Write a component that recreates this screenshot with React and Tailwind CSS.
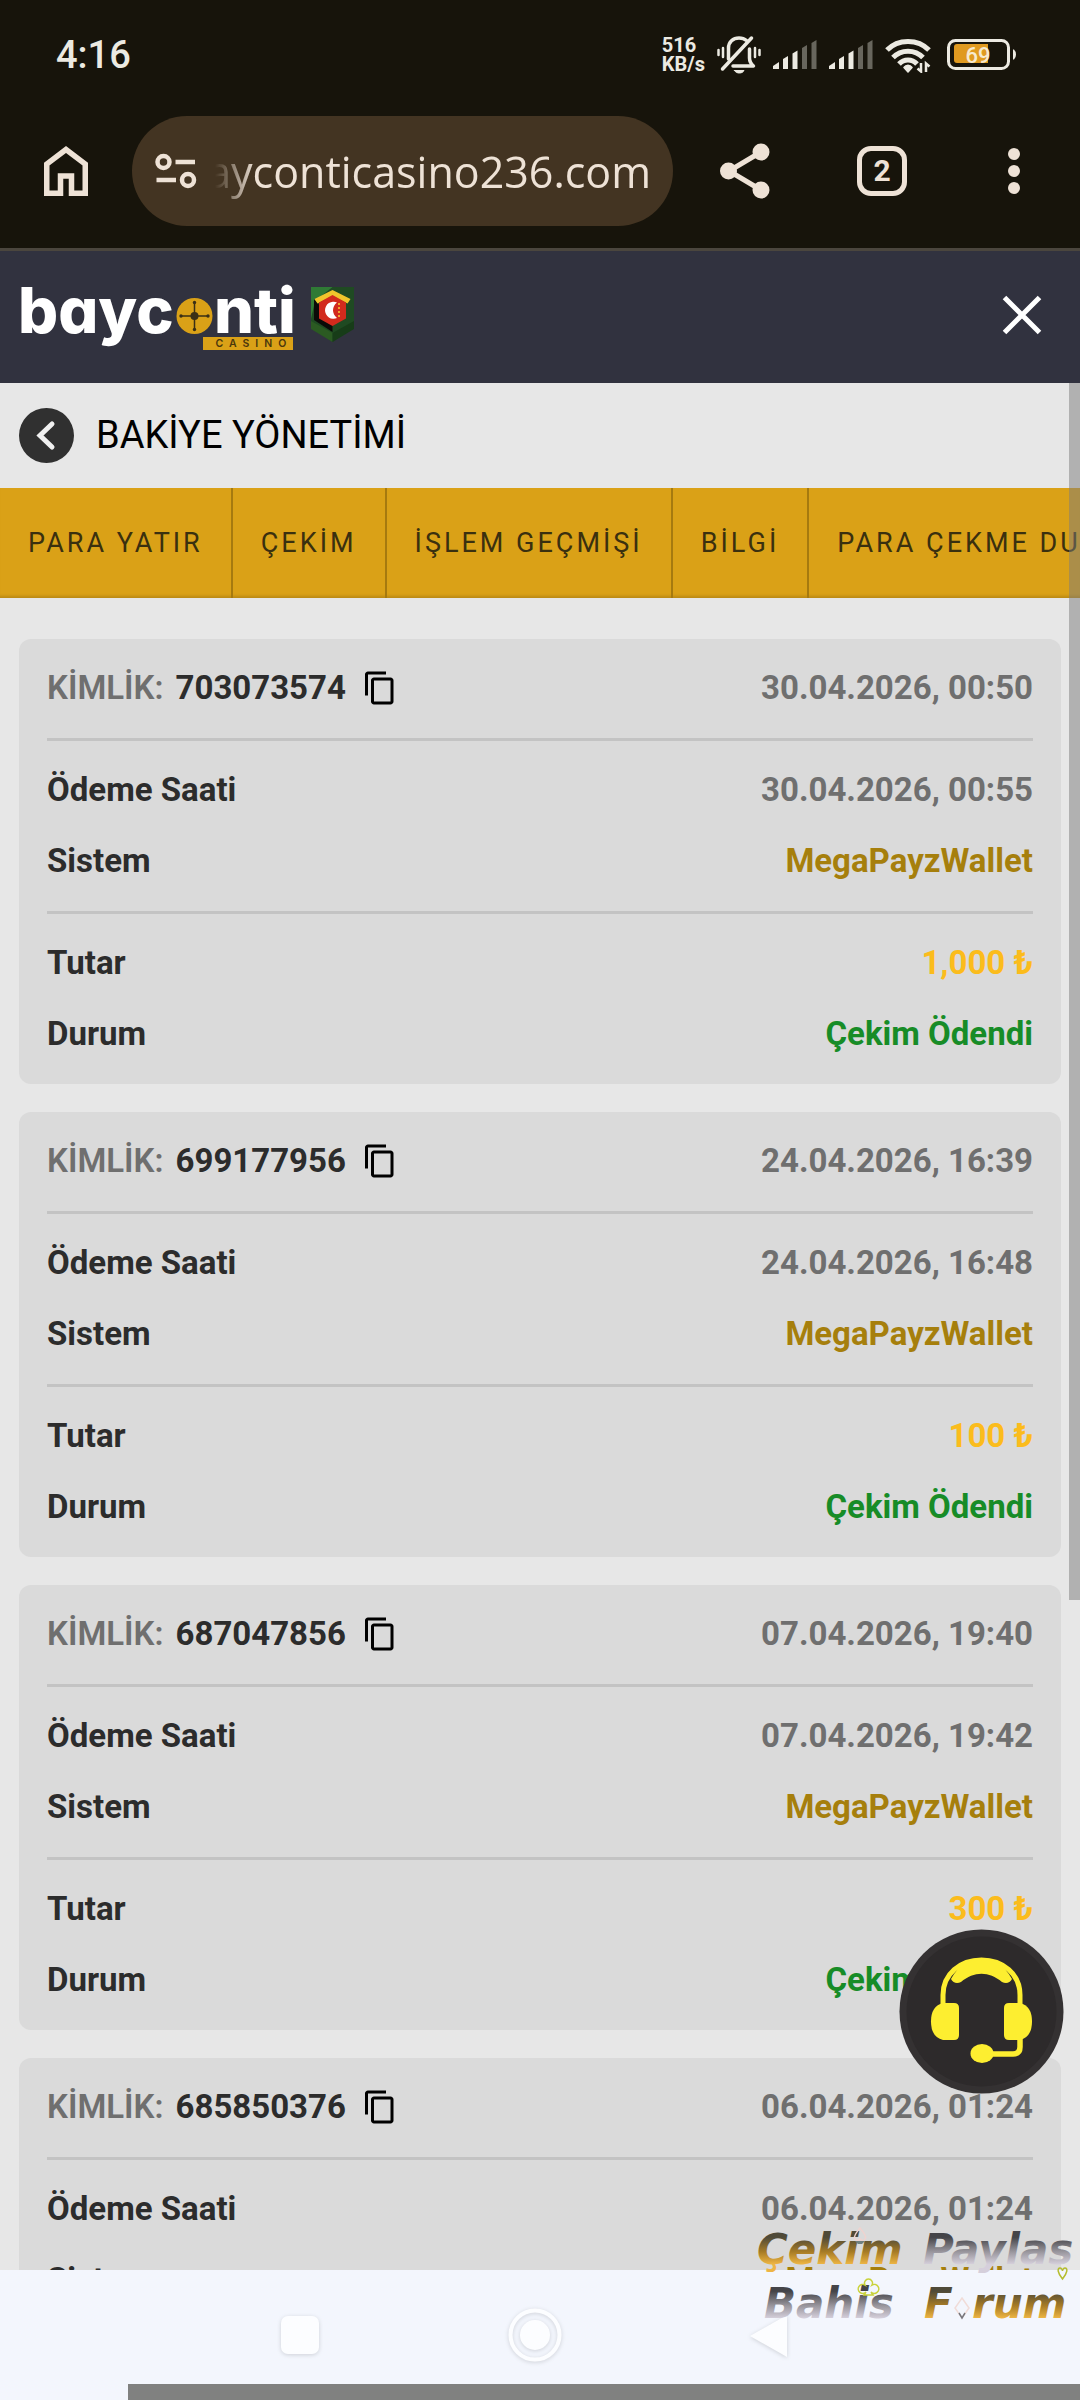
import React, { useState } from 'react';
import { MdContentCopy } from 'react-icons/md';

const tabs = ['PARA YATIR', 'ÇEKİM', 'İŞLEM GEÇMİŞİ', 'BİLGİ', 'PARA ÇEKME DURUMU'];

const payments = [
  { id: '703073574', created: '30.04.2026, 00:50', paid: '30.04.2026, 00:55', amount: '1,000 ₺' },
  { id: '699177956', created: '24.04.2026, 16:39', paid: '24.04.2026, 16:48', amount: '100 ₺' },
  { id: '687047856', created: '07.04.2026, 19:40', paid: '07.04.2026, 19:42', amount: '300 ₺' },
  { id: '685850376', created: '06.04.2026, 01:24', paid: '06.04.2026, 01:24', amount: '500 ₺' },
];

const SignalIcon = () => (
  <svg width="44" height="30" viewBox="0 0 44 30" fill="#eceae2">
    <path d="M0 29v-3l6-4v7z" />
    <path d="M10 29V19l5-3v13z" />
    <path d="M19.500 29V13.500l5-3V29z" />
    <path d="M29 29V8l5-3v24z" fill="#68665d" />
    <path d="M38.500 29V3l5-3v29z" fill="#68665d" />
  </svg>
);

const MuteIcon = () => (
  <svg width="44" height="40" viewBox="0 0 44 40" fill="none" stroke="#eceae2" strokeLinecap="round">
    <path d="M11.500 24V13c0-6 4.500-10 10.500-10 3 0 5.500.8 7.500 2.500" strokeWidth="3.500" />
    <path d="M32.500 14v9c0 3 1 5.500 4 8H16" strokeWidth="3.500" strokeLinejoin="round" />
    <path d="M34.500 3L5.500 34" strokeWidth="3.500" />
    <path d="M17.500 35.500h9.500c-1 2-3 2.500-4.700 2.500s-3.800-.5-4.800-2.500z" fill="#eceae2" strokeWidth="1" />
    <path d="M6 13v9M1.500 15v5M38 13v9M42.500 15v5" strokeWidth="2.500" />
  </svg>
);

const WifiIcon = () => (
  <svg width="46" height="36" viewBox="0 0 46 36" fill="none" stroke="#eceae2" strokeWidth="5">
    <path d="M2 13c11-11.500 31-11.500 42 0" />
    <path d="M8 20.500c8-8.500 22-8.500 30 0" />
    <path d="M14 27c5-5.500 13-5.500 18 0" />
    <path d="M19 30.500c2-3 6-3 8 0L23 35z" fill="#eceae2" strokeWidth="1.500" strokeLinejoin="round" />
    <path d="M36 26v8.500l-3.500-3M41 35v-8.500l3.500 3" strokeWidth="2.500" />
  </svg>
);

const BatteryIcon = () => (
  <svg width="70" height="32" viewBox="0 0 70 32">
    <rect x="1.500" y="1.500" width="60" height="28" rx="7" fill="none" stroke="#eceae2" strokeWidth="3" />
    <path d="M10 5h31v19H10a3 3 0 0 1-3-3V8a3 3 0 0 1 3-3z" fill="#e09a20" />
    <path d="M66 10.500h1q2 2 2 5t-2 5h-1z" fill="#eceae2" />
    <text x="31" y="23.500" textAnchor="middle" fontFamily="Roboto, sans-serif" fontWeight="500" fontSize="22" fill="#f7ead0">69</text>
  </svg>
);

const StatusBar = () => (
  <div className="flex h-[110px] items-center justify-between pl-14 pr-[63px] text-[#eceae2]">
    <span className="text-[38px] font-medium">4:16</span>
    <div className="flex items-center gap-3">
      <div className="text-[20px] font-bold leading-[19px]">
        <div>516</div>
        <div>KB/s</div>
      </div>
      <MuteIcon />
      <SignalIcon />
      <SignalIcon />
      <WifiIcon />
      <div className="pl-1">
        <BatteryIcon />
      </div>
    </div>
  </div>
);

const BrowserBar = () => (
  <div className="flex items-center border-b-[3px] border-[#4b463e] pb-[22px] pl-11 pr-[60px] pt-1.5 text-[#eee2d6]">
    <button aria-label="Ana sayfa">
      <svg width="44" height="50" viewBox="0 0 44 50" fill="none" stroke="currentColor" strokeWidth="5.500">
        <path d="M2.750 47.250V18L22 3.500 41.250 18v29.250H27.500V30h-11v17.250z" />
      </svg>
    </button>
    <div className="ml-11 flex h-[110px] min-w-0 flex-1 items-center rounded-full bg-[#433422] pl-[23px] pr-[22px]">
      <button aria-label="Site bilgileri" className="shrink-0">
        <svg width="42" height="38" viewBox="0 0 42 38" fill="none" stroke="currentColor" strokeWidth="4.500">
          <circle cx="8.500" cy="10" r="6" />
          <path d="M20.500 10H40M1.500 28H21" />
          <circle cx="33" cy="28" r="6" />
        </svg>
      </button>
      <input
        type="text"
        aria-label="Adres"
        readOnly
        value="ayconticasino236.com"
        className="ml-2.5 h-full w-0 min-w-0 flex-1 bg-transparent text-right font-['Open_Sans',sans-serif] text-[43px] outline-none [mask-image:linear-gradient(to_right,transparent_8px,black_48px)]"
      />
    </div>
    <button aria-label="Paylaş" className="ml-[47px]">
      <svg width="50" height="56" viewBox="0 0 50 56" fill="currentColor">
        <path d="M41 9L9 28l32 19" fill="none" stroke="currentColor" strokeWidth="5" />
        <circle cx="41" cy="9" r="8.500" />
        <circle cx="8.500" cy="28" r="8.500" />
        <circle cx="41" cy="47" r="8.500" />
      </svg>
    </button>
    <button className="ml-[87px] h-[50px] w-[50px] rounded-[14px] border-[5px] border-[#eee2d6] text-[30px] font-bold leading-10">
      2
    </button>
    <button aria-label="Menü" className="ml-[101px]">
      <svg width="12" height="46" viewBox="0 0 12 46" fill="currentColor">
        <circle cx="6" cy="6" r="6" />
        <circle cx="6" cy="23" r="6" />
        <circle cx="6" cy="40" r="6" />
      </svg>
    </button>
  </div>
);

const Logo = () => (
  <svg width="340" height="80" viewBox="0 0 340 80" className="[font-feature-settings:'cv11']">
    <g fontFamily="Inter, sans-serif" fontWeight="800" fontSize="63" fill="#fff">
      <text x="-1" y="58">bayc</text>
      <text x="195" y="58">nti</text>
    </g>
    <circle cx="175.500" cy="41" r="18" fill="#daa117" />
    <g fill="#3a2f16">
      <path d="M162 41h27M175.500 27v28" stroke="#3a2f16" strokeWidth="1.500" />
      <circle cx="175.500" cy="41" r="4" />
      <circle cx="175.500" cy="27.500" r="1.700" />
      <circle cx="175.500" cy="54.500" r="1.700" />
      <circle cx="162" cy="41" r="1.700" />
      <circle cx="189" cy="41" r="1.700" />
    </g>
    <rect x="184" y="62" width="90" height="13" fill="#daa117" />
    <text x="196.500" y="72" fontFamily="Inter, sans-serif" fontWeight="600" fontSize="10.500" letterSpacing="6" fill="#4a370c">CASINO</text>
    {/* club badge */}
    <path d="M292 12h43v40l-21.500 15L292 52z" fill="#1f4a22" />
    <path d="M292 12h21.500L296 26l-4 18z" fill="#2f7a35" />
    <path d="M292 46l21.500 12v9L292 54z" fill="#2b5a22" />
    <path d="M335 46l-21.500 12v9L335 54z" fill="#173c18" />
    <path d="M295 24l18.500 21v12L295 45z" fill="#0b0a08" />
    <path d="M313.500 15l18 9-3 4.500-15-7.500-15 7.500-3-4.500z" fill="#f0c52c" />
    <path d="M313.500 20l13.500 7.500v16L313.500 51 300 43.500v-16z" fill="#d22a1d" />
    <path d="M318 27.500a8.500 8.500 0 1 0 0 15.500 9.500 9.500 0 0 1 0-15.500z" fill="#fff" />
    <path d="M320 28v15" stroke="#f0a52c" strokeWidth="2" strokeDasharray="2 2" />
  </svg>
);

const SiteHeader = () => (
  <header className="flex h-[132px] items-center justify-between bg-[#31323f] pb-1 pl-[19px] pr-[38px]">
    <Logo />
    <button aria-label="Kapat">
      <svg width="40" height="40" viewBox="0 0 40 40" stroke="#fff" strokeWidth="5">
        <path d="M2.500 2.500l35 35M37.500 2.500l-35 35" />
      </svg>
    </button>
  </header>
);

const Row = ({ label, value, color }) => (
  <div className="flex justify-between">
    <dt>{label}</dt>
    <dd className={color}>{value}</dd>
  </div>
);

const PaymentCard = ({ payment }) => (
  <article className="divide-y-[3px] divide-[#c3c3c3] rounded-xl bg-[#dadada] px-7 text-[33px] font-bold leading-10 text-[#2c2c2c]">
    <div className="flex items-center justify-between pb-[30px] pt-[29px] text-[#6f6f6f]">
      <div className="flex items-center">
        <span className="font-semibold">KİMLİK:</span>
        <span className="ml-3 text-[#2c2c2c]">{payment.id}</span>
        <button aria-label="Kopyala" className="ml-4 text-black">
          <MdContentCopy className="size-9" />
        </button>
      </div>
      <time>{payment.created}</time>
    </div>
    <dl className="flex flex-col gap-[31px] pb-[30px] pt-[29px]">
      <Row label="Ödeme Saati" value={payment.paid} color="text-[#6f6f6f]" />
      <Row label="Sistem" value="MegaPayzWallet" color="text-[#a67f0c]" />
    </dl>
    <dl className="flex flex-col gap-[31px] pb-[30px] pt-[29px]">
      <Row label="Tutar" value={payment.amount} color="text-[#fbbc1c]" />
      <Row label="Durum" value="Çekim Ödendi" color="text-[#178c27]" />
    </dl>
  </article>
);

const SupportButton = () => (
  <button aria-label="Canlı destek" className="absolute bottom-[176px] right-4">
    <svg width="165" height="165" viewBox="0 0 165 165">
      <circle cx="82.500" cy="82.500" r="82" fill="#343132" />
      <circle cx="82.500" cy="82.500" r="75" fill="#2d2a2b" />
      <g fill="#fdee30">
        <path d="M44 76V66c0-21 17-35 38.500-35S121 45 121 66v10" fill="none" stroke="#fdee30" strokeWidth="5" />
        <path d="M52 50c8-14 18-21 30.500-21S105 36 113 50c-2 4-6 5-10 3-13-11-28-11-41 0-4 2-8 1-10-3z" />
        <path d="M44 74h11q5 0 5 5v27q0 5-5 5H44q-12-3-12-18.500T44 74z" />
        <path d="M121 74h-11q-5 0-5 5v27q0 5 5 5h11q12-3 12-18.500T121 74z" />
        <path d="M121 108v10q0 7-7 7H90" fill="none" stroke="#fdee30" strokeWidth="5.500" />
        <ellipse cx="83" cy="124.500" rx="11.500" ry="9.500" />
      </g>
    </svg>
  </button>
);

const SystemNav = () => (
  <footer className="bg-[#f3f6fd]">
    <nav className="flex h-[114px] items-center justify-center gap-[179px] pr-2.5 pt-4">
      <button aria-label="Son uygulamalar" className="drop-shadow-sm">
        <svg width="56" height="56" viewBox="0 0 56 56">
          <rect x="9" y="9" width="38" height="38" rx="7" fill="#fcfdff" />
        </svg>
      </button>
      <button aria-label="Giriş" className="drop-shadow-sm">
        <svg width="56" height="56" viewBox="0 0 56 56">
          <circle cx="28" cy="28" r="24.500" fill="none" stroke="#fcfdff" strokeWidth="4" />
          <circle cx="28" cy="28" r="15" fill="#fcfdff" />
        </svg>
      </button>
      <button aria-label="Geri" className="drop-shadow-sm">
        <svg width="56" height="56" viewBox="0 0 56 56">
          <path d="M8 29L45 8v42z" fill="#fcfdff" />
        </svg>
      </button>
    </nav>
    <div className="ml-32 h-4 bg-[#808180]" />
  </footer>
);

const Watermark = () => (
  <svg
    width="330"
    height="110"
    viewBox="0 0 330 110"
    className="pointer-events-none absolute bottom-[70px] right-0"
    fontFamily="'DejaVu Sans', sans-serif"
    fontSize="42"
    fontWeight="700"
    fontStyle="italic"
  >
    <defs>
      <linearGradient id="gold" x1="0" y1="0" x2="0" y2="1">
        <stop offset="0.25" stopColor="#4f4a38" />
        <stop offset="0.55" stopColor="#a87c25" />
        <stop offset="0.8" stopColor="#eeb544" />
      </linearGradient>
      <linearGradient id="silver" x1="0" y1="0" x2="0" y2="1">
        <stop offset="0.25" stopColor="#444448" />
        <stop offset="0.55" stopColor="#9a979e" />
        <stop offset="0.8" stopColor="#d5cfdb" />
      </linearGradient>
    </defs>
    <text x="7" y="44" fill="url(#gold)">Çekim</text>
    <text x="173" y="44" fill="url(#silver)">Paylas</text>
    <text x="14" y="98" fill="url(#silver)">Bahis</text>
    <text x="174" y="98" fill="url(#gold)">F</text>
    <text x="222" y="98" fill="url(#gold)">rum</text>
    <g fill="none" strokeWidth="1.500">
      <path d="M110 0c-4 5-6 7-5.500 10 .5 3 4 3 5.500 1 1.500 2 5 2 5.500-1 .5-3-1.500-5-5.500-10z" transform="translate(0 8)" stroke="#f0d3cf" />
      <path d="M105 21h10l-3 3h-4z" fill="#6f8080" stroke="none" />
      <path d="M312.500 59c-5-6-5.500-11-2.500-11 1.500 0 2.500 2 2.500 3 0-1 1-3 2.500-3 3 0 2.500 5-2.500 11z" stroke="#b5bd30" />
      <path d="M116 72a4.500 4.500 0 1 1-1-7 4 4 0 1 1 7 0 4.500 4.500 0 1 1-1 7l2 3h-9z" stroke="#c9d23a" />
      <path d="M212 78l7 10-7 10-7-10z" stroke="#f0dcd8" />
      <path d="M209 93l3 5 3-5" stroke="#77777d" />
    </g>
  </svg>
);

const App = () => {
  const [activeTab, setActiveTab] = useState('ÇEKİM');

  return (
    <div className="relative flex h-screen flex-col overflow-hidden bg-[#e7e7e7] font-[Roboto,sans-serif]">
      <div className="shrink-0 bg-[#17140b]">
        <StatusBar />
        <BrowserBar />
        <SiteHeader />
      </div>

      <main className="relative min-h-0 flex-1">
        <div className="h-full overflow-y-auto [scrollbar-width:none]">
          <div className="flex h-[105px] items-center gap-[22px] px-[19px]">
            <button aria-label="Geri dön">
              <svg width="55" height="55" viewBox="0 0 55 55" fill="none">
                <circle cx="27.500" cy="27.500" r="27.500" fill="#303030" />
                <path d="M33 16L21 27.500 33 39" stroke="#f0f0f0" strokeWidth="5" strokeLinecap="round" />
              </svg>
            </button>
            <h1 className="text-[38px] text-black">BAKİYE YÖNETİMİ</h1>
          </div>

          {/* Tabs */}
          <div className="flex h-[110px] divide-x-2 divide-[#a67a0f] overflow-hidden bg-[#daa117] shadow-[inset_0_-4px_3px_-2px_rgba(0,0,0,0.15)]">
            {tabs.map(tab => (
              <button
                key={tab}
                aria-pressed={tab === activeTab}
                onClick={() => setActiveTab(tab)}
                className="shrink-0 px-7 text-[27px] tracking-[3px] text-[#3a300f]"
              >
                {tab}
              </button>
            ))}
          </div>

          {/* Payments */}
          <div className="flex flex-col gap-7 px-[19px] py-[41px]">
            {payments.map(payment => (
              <PaymentCard key={payment.id} payment={payment} />
            ))}
          </div>
        </div>
        <div className="absolute right-0 top-0 h-[1217px] max-h-full w-[11px] bg-[#7c7c7c]/50" />
        <SupportButton />
      </main>

      <SystemNav />
      <Watermark />
    </div>
  );
};

export default App;
